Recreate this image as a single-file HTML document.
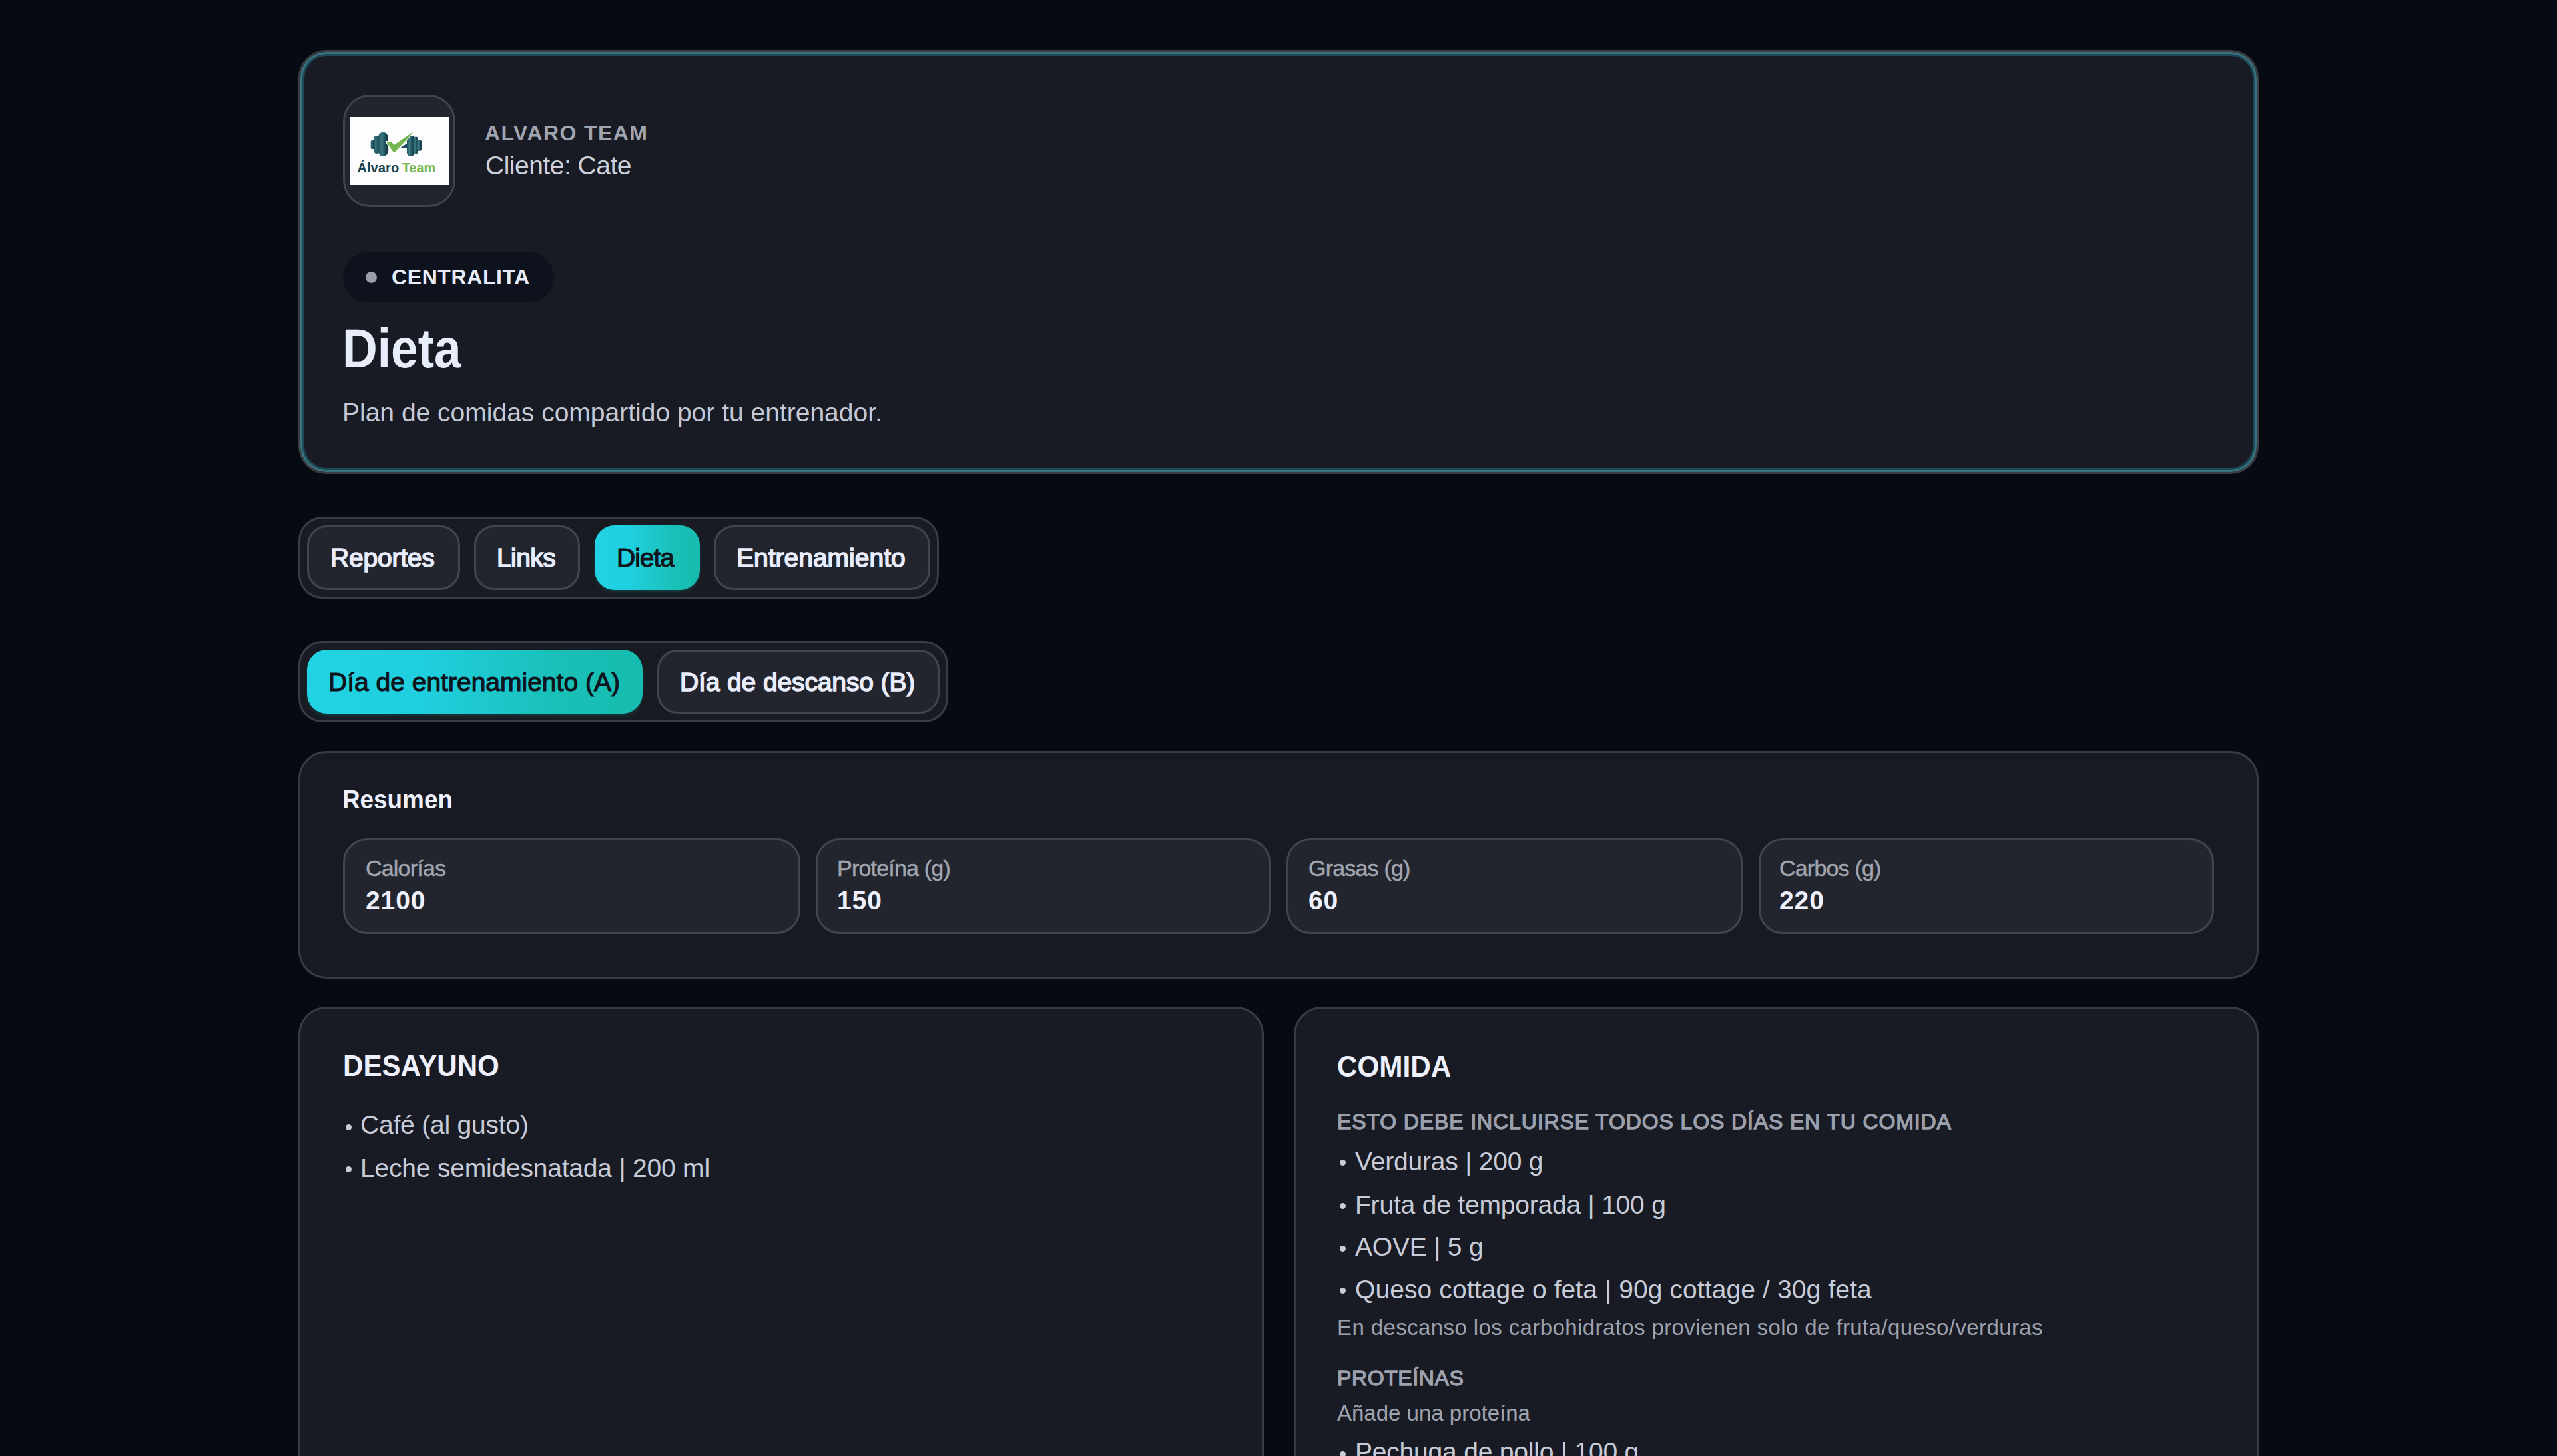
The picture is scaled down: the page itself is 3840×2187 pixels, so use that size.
<!DOCTYPE html>
<html lang="es">
<head>
<meta charset="utf-8">
<title>Dieta</title>
<style>
html,body{margin:0;padding:0;}
body{width:3840px;height:2187px;overflow:hidden;background:#060a13;position:relative;font-family:"Liberation Sans",sans-serif;}
.a{position:absolute;box-sizing:border-box;}
.t{position:absolute;white-space:nowrap;line-height:1;}
.card{position:absolute;box-sizing:border-box;background:#181b23;border:3px solid #393b42;border-radius:42px;}
#hero{background:#181b23;left:448px;top:75px;width:2944px;height:637px;border:3px solid #3c3e44;border-radius:42px;box-shadow:inset 0 0 0 3px #3a7480, inset 0 0 0 6px #1c4a57;}
.seg{position:absolute;box-sizing:border-box;background:#181b22;border:3px solid #393c43;border-radius:36px;}
.btn{position:absolute;box-sizing:border-box;background:#22252e;border:3px solid #41464c;border-radius:30px;}
.act{position:absolute;box-sizing:border-box;border-radius:30px;background:linear-gradient(90deg,#22d3e3 0%,#20cfdf 35%,#19bfb5 78%,#17bbb0 100%);box-shadow:0 4px 6px -2px rgba(20,184,170,0.28);}
.stat{position:absolute;box-sizing:border-box;background:#22252e;border:3px solid #41464c;border-radius:36px;}
.dot{position:absolute;width:9px;height:9px;border-radius:50%;background:#c8ccd9;}
</style>
</head>
<body>

<!-- HERO CARD -->
<div id="hero" class="a"></div>

<!-- logo box -->
<div class="a" style="left:515px;top:142px;width:169px;height:169px;background:#22252e;border:3px solid #40454b;border-radius:40px;"></div>
<svg class="a" style="left:525px;top:176px;" width="150" height="102" viewBox="0 0 150 102">
  <defs>
    <linearGradient id="pl" x1="0" y1="0" x2="1" y2="0">
      <stop offset="0" stop-color="#1f5561"/><stop offset="0.35" stop-color="#3a7a84"/><stop offset="0.7" stop-color="#1d4b57"/><stop offset="1" stop-color="#10303a"/>
    </linearGradient>
  </defs>
  <rect x="0" y="0" width="150" height="102" fill="#fdfdff"/>
  <rect x="31.7" y="34.8" width="5" height="13.5" rx="2.5" fill="url(#pl)"/>
  <rect x="36.6" y="28" width="8" height="27" rx="4" fill="url(#pl)"/>
  <path d="M43 30 Q44 22.8 50 22.8 Q56 22.8 57.8 30 L58 36 L54 36 L56 40 Q59 46 58 52 Q56 59 50 59 Q43.5 59 43 50 Z" fill="url(#pl)"/>
  <path d="M75 47.1 L86.6 39.3 L86.6 47.1 Z" fill="#1d4b57"/>
  <rect x="85.9" y="27.4" width="11.5" height="31.6" rx="5.7" fill="url(#pl)"/>
  <rect x="95.4" y="29.5" width="7.6" height="25.7" rx="3.8" fill="url(#pl)"/>
  <rect x="100.7" y="34.4" width="7.8" height="16.6" rx="3.9" fill="url(#pl)"/>
  <path d="M54.7 37.1 L62.3 37.1 L66.9 41.8 L96.5 21.4 L84.8 35.1 L66.5 54.1 Z" fill="#ffffff" stroke="#ffffff" stroke-width="2.2" stroke-linejoin="round"/>
  <path d="M54.7 37.1 L62.3 37.1 L66.9 41.8 L96.5 21.4 L84.8 35.1 L66.5 54.1 Z" fill="#77b752"/>
  <text x="11.3" y="82.7" font-family="Liberation Sans" font-weight="700" font-size="21" fill="#1b4652" textLength="63" lengthAdjust="spacingAndGlyphs">Álvaro</text>
  <text x="78.7" y="82.7" font-family="Liberation Sans" font-weight="700" font-size="20.5" fill="#74b84e" textLength="50.5" lengthAdjust="spacingAndGlyphs">Team</text>
</svg>

<div class="t" style="left:728px;top:184px;font-size:32px;font-weight:700;letter-spacing:1.4px;color:#a0a5b1;">ALVARO TEAM</div>
<div class="t" style="left:729px;top:229px;font-size:39px;letter-spacing:-0.5px;color:#cdd1dc;">Cliente: Cate</div>

<!-- pill -->
<div class="a" style="left:515px;top:379px;width:317px;height:75px;background:#0e121c;border-radius:38px;"></div>
<div class="a" style="left:549px;top:408px;width:17px;height:17px;border-radius:50%;background:#9a9ca8;"></div>
<div class="t" style="left:588px;top:400px;font-size:32px;font-weight:700;letter-spacing:0.6px;color:#e8ecf8;">CENTRALITA</div>

<div class="t" style="left:514px;top:482px;font-size:83px;font-weight:700;transform:scaleX(0.88);transform-origin:0 0;color:#e8edfb;">Dieta</div>
<div class="t" style="left:514px;top:600px;font-size:39px;color:#c5c9d6;">Plan de comidas compartido por tu entrenador.</div>

<!-- TABS -->
<div class="seg" style="left:448px;top:776px;width:962px;height:123px;"></div>
<div class="btn" style="left:461px;top:789px;width:230px;height:97px;"></div>
<div class="btn" style="left:712px;top:789px;width:159px;height:97px;"></div>
<div class="act" style="left:893px;top:789px;width:158px;height:97px;"></div>
<div class="btn" style="left:1072px;top:789px;width:325px;height:97px;"></div>
<div class="t" style="left:496px;top:818px;font-size:39px;letter-spacing:-0.2px;color:#e9edfb;-webkit-text-stroke:1.6px #e9edfb;">Reportes</div>
<div class="t" style="left:746px;top:818px;font-size:39px;letter-spacing:-0.6px;color:#e9edfb;-webkit-text-stroke:1.6px #e9edfb;">Links</div>
<div class="t" style="left:926px;top:818px;font-size:39px;letter-spacing:-1px;color:#0f141c;-webkit-text-stroke:1.2px #0f141c;">Dieta</div>
<div class="t" style="left:1106px;top:818px;font-size:39px;letter-spacing:0px;color:#e9edfb;-webkit-text-stroke:1.6px #e9edfb;">Entrenamiento</div>

<!-- DAY TOGGLE -->
<div class="seg" style="left:448px;top:963px;width:976px;height:122px;"></div>
<div class="act" style="left:461px;top:976px;width:504px;height:96px;"></div>
<div class="btn" style="left:987px;top:976px;width:424px;height:96px;"></div>
<div class="t" style="left:493px;top:1005px;font-size:39px;letter-spacing:0px;color:#0f141c;-webkit-text-stroke:1.2px #0f141c;">Día de entrenamiento (A)</div>
<div class="t" style="left:1021px;top:1005px;font-size:39px;letter-spacing:-0.12px;color:#e9edfb;-webkit-text-stroke:1.6px #e9edfb;">Día de descanso (B)</div>

<!-- RESUMEN -->
<div class="card" style="left:448px;top:1128px;width:2944px;height:342px;background:#171a22;"></div>
<div class="t" style="left:514px;top:1181px;font-size:39px;font-weight:700;transform:scaleX(0.945);transform-origin:0 0;color:#eef1fb;">Resumen</div>

<div class="stat" style="left:515px;top:1259px;width:687px;height:144px;"></div>
<div class="stat" style="left:1225px;top:1259px;width:683px;height:144px;"></div>
<div class="stat" style="left:1932px;top:1259px;width:685px;height:144px;"></div>
<div class="stat" style="left:2641px;top:1259px;width:684px;height:144px;"></div>

<div class="t" style="left:549px;top:1287px;font-size:34px;letter-spacing:-0.8px;color:#a1a5b0;-webkit-text-stroke:0.5px #a1a5b0;">Calorías</div>
<div class="t" style="left:549px;top:1333px;font-size:39px;font-weight:700;letter-spacing:0.9px;color:#eef1fb;">2100</div>
<div class="t" style="left:1257px;top:1287px;font-size:34px;letter-spacing:-0.8px;color:#a1a5b0;-webkit-text-stroke:0.5px #a1a5b0;">Proteína (g)</div>
<div class="t" style="left:1257px;top:1333px;font-size:39px;font-weight:700;letter-spacing:0.9px;color:#eef1fb;">150</div>
<div class="t" style="left:1965px;top:1287px;font-size:34px;letter-spacing:-0.8px;color:#a1a5b0;-webkit-text-stroke:0.5px #a1a5b0;">Grasas (g)</div>
<div class="t" style="left:1965px;top:1333px;font-size:39px;font-weight:700;letter-spacing:0.9px;color:#eef1fb;">60</div>
<div class="t" style="left:2672px;top:1287px;font-size:34px;letter-spacing:-0.8px;color:#a1a5b0;-webkit-text-stroke:0.5px #a1a5b0;">Carbos (g)</div>
<div class="t" style="left:2672px;top:1333px;font-size:39px;font-weight:700;letter-spacing:0.9px;color:#eef1fb;">220</div>

<!-- DESAYUNO -->
<div class="card" style="left:448px;top:1512px;width:1450px;height:900px;"></div>
<div class="t" style="left:515px;top:1578px;font-size:45px;font-weight:700;transform:scaleX(0.936);transform-origin:0 0;color:#eef1fb;">DESAYUNO</div>
<div class="dot" style="left:519px;top:1689px;"></div>
<div class="t" style="left:541px;top:1670px;font-size:39px;letter-spacing:-0.2px;color:#c8ccd9;">Café (al gusto)</div>
<div class="dot" style="left:519px;top:1752px;"></div>
<div class="t" style="left:541px;top:1735px;font-size:39px;letter-spacing:-0.2px;color:#c8ccd9;">Leche semidesnatada | 200 ml</div>

<!-- COMIDA -->
<div class="card" style="left:1943px;top:1512px;width:1449px;height:900px;"></div>
<div class="t" style="left:2008px;top:1579px;font-size:45px;font-weight:700;transform:scaleX(0.938);transform-origin:0 0;color:#eef1fb;">COMIDA</div>
<div class="t" style="left:2008px;top:1669px;font-size:32px;letter-spacing:0.88px;color:#9ca0ad;-webkit-text-stroke:1.3px #9ca0ad;">ESTO DEBE INCLUIRSE TODOS LOS DÍAS EN TU COMIDA</div>

<div class="dot" style="left:2012px;top:1742px;"></div>
<div class="t" style="left:2035px;top:1725px;font-size:39px;letter-spacing:-0.2px;color:#c8ccd9;">Verduras | 200 g</div>
<div class="dot" style="left:2012px;top:1807px;"></div>
<div class="t" style="left:2035px;top:1790px;font-size:39px;letter-spacing:-0.2px;color:#c8ccd9;">Fruta de temporada | 100 g</div>
<div class="dot" style="left:2012px;top:1871px;"></div>
<div class="t" style="left:2035px;top:1853px;font-size:39px;letter-spacing:-0.2px;color:#c8ccd9;">AOVE | 5 g</div>
<div class="dot" style="left:2012px;top:1934px;"></div>
<div class="t" style="left:2035px;top:1917px;font-size:39px;letter-spacing:0.1px;color:#c8ccd9;">Queso cottage o feta | 90g cottage / 30g feta</div>

<div class="t" style="left:2008px;top:1977px;font-size:33px;letter-spacing:0.4px;color:#9ea2ae;">En descanso los carbohidratos provienen solo de fruta/queso/verduras</div>
<div class="t" style="left:2008px;top:2054px;font-size:32px;letter-spacing:0.6px;color:#9ea2ae;-webkit-text-stroke:1.3px #9ea2ae;">PROTEÍNAS</div>
<div class="t" style="left:2008px;top:2106px;font-size:33px;color:#a0a4b0;">Añade una proteína</div>
<div class="dot" style="left:2012px;top:2180px;"></div>
<div class="t" style="left:2035px;top:2161px;font-size:39px;letter-spacing:-0.2px;color:#c8ccd9;">Pechuga de pollo | 100 g</div>

</body>
</html>
